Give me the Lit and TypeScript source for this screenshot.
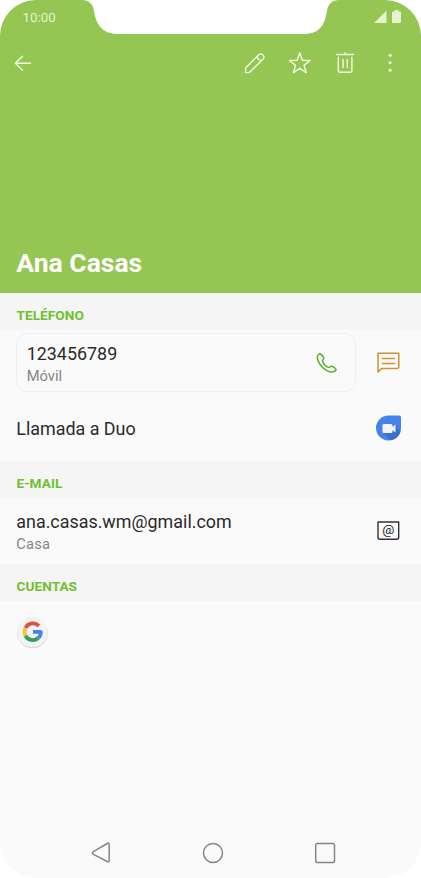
import { LitElement, html, css, svg } from "lit";
import { customElement, property } from "lit/decorators.js";

const icons = {
  back: svg`<path d="M19.500 12.300H4.300M11.500 5.300L4.300 12.300L11.500 19.300"/>`,
  edit: svg`<path d="M3.600 21.600V16.900L16.500 3.900Q18.800 1.800 21 4Q23 6.100 21 8.200L8.200 20.800Q7.400 21.600 6.400 21.600ZM15.400 5Q15.100 9.400 19.800 9.400"/>`,
  star: svg`<path d="M12.800 1.800L15.400 9.200L23.200 9.500L17.100 14.200L19.200 21.600L12.800 17.300L6.400 21.600L8.500 14.200L2.400 9.500L10.200 9.200Z"/>`,
  trash: svg`<path d="M3.500 3.500H20.700M12.100 1.700V3.500M5.300 6.300V19.300Q5.300 21.300 7.300 21.300H16.900Q18.900 21.300 18.900 19.300V6.300M10.100 8.500V16.500M14.200 8.500V16.500"/>`,
};

@customElement("section-title")
export class SectionTitle extends LitElement {
  @property() label = "";
  static styles = css`
    :host { display: flex; box-sizing: border-box; height: 37px; padding: 8px 16.500px 0; background: #f5f5f5; color: #6fc12f; font: 700 13.700px/28px Roboto, sans-serif; }
  `;
  render() {
    return html`<span>${this.label}</span>`;
  }
}

@customElement("app-root")
export class AppRoot extends LitElement {
  static styles = css`
    :host { display: block; width: 421px; height: 878px; background: #fff; font-family: Roboto, sans-serif; color: #2b2b2b; }
    * { box-sizing: border-box; }
    svg { display: block; flex: none; fill: none; stroke-linecap: round; stroke-linejoin: round; }
    .phone { position: relative; display: flex; flex-direction: column; height: 878px; overflow: hidden; border-radius: 36px; background: #fafafa; }
    .notch { position: absolute; top: 0; left: 80px; }
    header { height: 292.500px; margin-bottom: .5px; flex: none; background: #95c552; color: #f3fbe2; }
    .status { display: flex; justify-content: space-between; height: 34px; padding: 0 20px 0 22.500px; font-size: 13.300px; line-height: 35px; color: #e5f3cf; }
    .toolbar { display: flex; align-items: center; height: 58px; padding: 0 19px 0 11px; stroke: #f3fbe2; stroke-width: 1.400; }
    .actions { display: flex; gap: 21.300px; margin-left: auto; }
    h1 { margin: 153px 0 0 16.300px; font-size: 26.500px; line-height: 35px; font-weight: 700; color: #fff; }
    .phones { height: 131px; padding: 3px 0 0 16px; }
    .row { display: flex; align-items: center; }
    .card { display: flex; align-items: center; justify-content: space-between; width: 340px; height: 59px; padding: 4px 16px 0 9.700px; border: 1px solid #f0f0f0; border-radius: 11px; }
    .card svg { margin-top: -4px; }
    .main { font-size: 17.900px; line-height: 22px; }
    .sub { font-size: 14.700px; line-height: 22px; color: #858585; }
    .side { margin-left: 20px; }
    .duo { height: 69px; padding: 4px 19px 0 .3px; justify-content: space-between; }
    .mail { height: 66px; padding: 4px 20px 0 16.300px; justify-content: space-between; }
    .mail .sub { letter-spacing: .2px; }
    .mail svg { margin-top: -4px; }
    .account { flex: 1; padding: 15px 0 0 16px; }
    nav { display: flex; height: 51px; padding-left: 89px; gap: 88px; stroke: #858585; stroke-width: 1.500; }
  `;

  render() {
    return html`
      <main class="phone">
        <header>
          <div class="status">
            <span>10:00</span>
            <svg width="28" height="34">
              <path fill="#e5f3cf" d="M1 23L13.500 10.500V23ZM19 12.500Q19 11.500 20 11.500H21.500V10H25.500V11.500H27Q28 11.500 28 12.500V22Q28 23 27 23H20Q19 23 19 22Z"/>
            </svg>
          </div>
          <div class="toolbar">
            <svg width="24" height="24">${icons.back}</svg>
            <div class="actions">
              <svg width="24" height="24">${icons.edit}</svg>
              <svg width="24" height="24">${icons.star}</svg>
              <svg width="24" height="24">${icons.trash}</svg>
              <svg width="24" height="24" stroke="none"><g fill="#f3fbe2" stroke="none"><circle cx="12.100" cy="4.200" r="1.500"/><circle cx="12.100" cy="11.700" r="1.500"/><circle cx="12.100" cy="19.200" r="1.500"/></g></svg>
            </div>
          </div>
          <h1>Ana Casas</h1>
        </header>
        <svg class="notch" width="262" height="35"><path fill="#fff" d="M2 0C9 0 13 4 14 11C16 25 23 34 38 34H224C239 34 245 25 247 11C248 4 252 0 259 0Z"/></svg>

        <section-title label="TELÉFONO"></section-title>
        <section class="phones">
          <div class="row">
            <div class="card">
              <div><div class="main">123456789</div><div class="sub">Móvil</div></div>
              <svg width="24" height="24" stroke="#4caf22" stroke-width="1.400"><path d="M4.700 2.500C2.500 3.800 1.900 6.200 2.800 9C4.400 13.800 9 18.900 14 20.600C17.300 21.600 20 20.800 21.200 18.600C20.500 17.200 18.700 16 16.800 15.100C15.600 14.900 15 16.400 13.700 16.400C11 15.600 8.400 12.600 7.400 10C7.500 8.900 9.200 8.500 8.800 7C8.100 5.200 6.300 3.100 4.700 2.500Z"/></svg>
            </div>
            <svg class="side" width="25" height="24" stroke="#cf922d" stroke-width="1.500"><path d="M2 21.100V2.200H22.800V15.500Q22.800 17.500 20.800 17.500H5.500ZM6.300 7.500H18.500M6.300 12.500H18.500"/></svg>
          </div>
          <div class="row duo">
            <span class="main">Llamada a Duo</span>
            <svg width="27" height="27">
              <path fill="#4583ec" d="M13.500 .5H24Q26 .5 26 2.500V13A12.500 12.500 0 1 1 13.500 .5Z"/>
              <path fill="#3a70cb" d="M8 17L15 25.300Q23 24.500 25.600 16.500L20.500 10.500V16.500Z"/>
              <path fill="#f1f3f5" d="M8.500 9H16Q17.500 9 17.500 10.500V12L20.500 9.500V17.500L17.500 15V16.500Q17.500 18 16 18H8.500Q7.500 18 7.500 17V10Q7.500 9 8.500 9Z"/>
            </svg>
          </div>
        </section>

        <section-title label="E-MAIL"></section-title>
        <section class="row mail">
          <div><div class="main">ana.casas.wm@gmail.com</div><div class="sub">Casa</div></div>
          <svg width="25" height="24"><path stroke="#333" stroke-width="1.400" d="M2 3H22.700V18.300Q22.700 20.300 20.700 20.300H4Q2 20.300 2 18.300Z"/><text x="12.400" y="15.200" text-anchor="middle" font-family="Roboto" font-size="13.500" fill="#222">@</text></svg>
        </section>

        <section-title label="CUENTAS"></section-title>
        <section class="account">
          <svg width="34" height="34">
            <circle cx="16.500" cy="16.800" r="15.400" fill="#d9d9d9"/><circle cx="16.500" cy="16" r="15.200" fill="#f3f3f3"/>
            <g stroke-width="3.800" stroke-linecap="butt">
              <path stroke="#dd5144" d="M22.900 9.900A8.300 8.300 0 0 0 9.500 12"/>
              <path stroke="#f6c231" d="M9.500 12A8.300 8.300 0 0 0 9.500 19.800"/>
              <path stroke="#35a055" d="M9.500 19.800A8.300 8.300 0 0 0 22.200 22"/>
              <path stroke="#4485f0" d="M22.200 22A8.300 8.300 0 0 0 24.900 15.900H17"/>
            </g>
          </svg>
        </section>
        <nav>
          <svg width="24" height="50"><path d="M4 24.800L18.200 16.500Q20.200 15.400 20.200 17.500V33.500Q20.200 35.600 18.200 34.500L4 27.200Q3 26 4 24.800Z"/></svg>
          <svg width="24" height="50"><circle cx="12" cy="26" r="9.500"/></svg>
          <svg width="24" height="50"><rect x="2.700" y="16.500" width="18.800" height="19" rx="1.800"/></svg>
        </nav>
      </main>
    `;
  }
}
